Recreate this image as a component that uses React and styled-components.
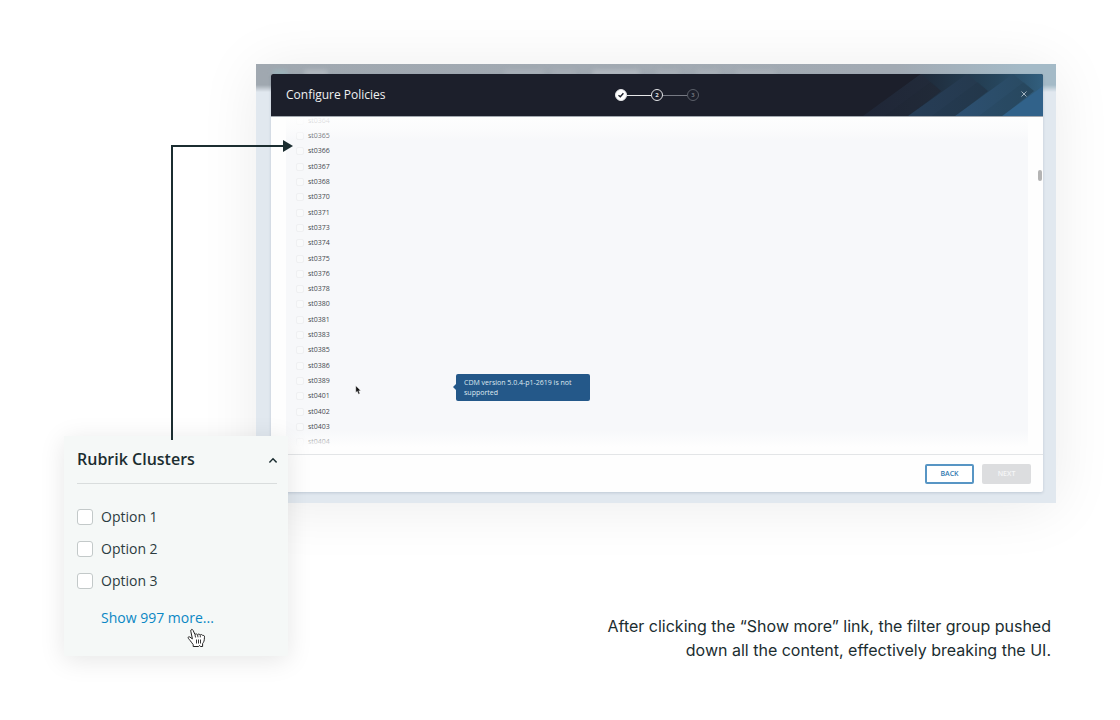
import React from "react";
import styled, { createGlobalStyle } from "styled-components";

const clusters = [
  "st0364", "st0365", "st0366", "st0367", "st0368", "st0370", "st0371", "st0373",
  "st0374", "st0375", "st0376", "st0378", "st0380", "st0381", "st0383", "st0385",
  "st0386", "st0389", "st0401", "st0402", "st0403", "st0404",
];

const GlobalStyle = createGlobalStyle`
  *, *::before, *::after { box-sizing: border-box; }
  body {
    margin: 0;
    background: #fff;
    color: #1b2d30;
    font-family: "Open Sans", "Noto Sans", sans-serif;
  }
`;

const Page = styled.main`
  position: relative;
  display: grid;
  grid-template-columns: 192px 32px 1fr;
  grid-template-rows: auto 67px auto;
  padding: 64px;
`;

const Screenshot = styled.section`
  grid-column: 2 / 4;
  grid-row: 1 / 3;
  position: relative;
  padding: 10px 13px 11px 15px;
  background: #e1e8ef;
  box-shadow: 0 4px 56px rgba(0, 0, 0, 0.08);
`;

const BackdropBar = styled.div`
  position: absolute;
  inset: 0 0 auto;
  height: 28px;
  overflow: hidden;
  background: linear-gradient(90deg, #a0a8b0 0%, #a2aab3 80%, #a4bac7 96%);
  mask-image: linear-gradient(#000 75%, transparent);
`;

const Ghost = styled.span`
  position: absolute;
  top: 6px;
  left: ${(p) => p.$at}%;
  width: ${(p) => p.$w}px;
  height: 6px;
  border-radius: 3px;
  background: ${(p) => p.$tint || "#b4bac1"};
  filter: blur(2px);
`;

const Modal = styled.div`
  position: relative;
  background: #fefefe;
  border-radius: 2px;
  box-shadow: 0 1px 3px rgba(60, 80, 110, 0.2);
`;

const ModalHeader = styled.header`
  position: relative;
  display: grid;
  grid-template-columns: 1fr auto 1fr;
  align-items: center;
  height: 43px;
  padding: 0 15px;
  overflow: hidden;
  background: #1c1f2b;
  border-bottom: 1px solid #a3a9b0;
  border-radius: 2px 2px 0 0;
`;

const HeaderArt = styled.svg`
  position: absolute;
  top: 0;
  right: 0;
  width: 192px;
  height: 42px;
`;

const ModalTitle = styled.h1`
  margin: 0;
  color: #f0f1f2;
  font-size: 12px;
  line-height: 16px;
  font-weight: 500;
`;

const Steps = styled.ol`
  display: flex;
  align-items: center;
  margin: 0;
  padding: 0;
  list-style: none;
`;

const Step = styled.li`
  display: grid;
  place-items: center;
  width: 12px;
  height: 12px;
  border: 1px solid ${(p) => (p.$muted ? "#5b5f69" : "#e4e5e8")};
  border-radius: 50%;
  background: ${(p) => (p.$done ? "#fff" : "transparent")};
  color: ${(p) => (p.$muted ? "#6d717a" : "#e4e5e8")};
  font-size: 6px;
  line-height: 8px;
  font-weight: 700;
`;

const StepLine = styled.li`
  width: 24px;
  height: 1px;
  background: ${(p) => (p.$muted ? "#777a84" : "#e6e7e9")};
`;

const CloseButton = styled.button`
  position: relative;
  justify-self: end;
  display: grid;
  place-items: center;
  width: 8px;
  height: 8px;
  margin-bottom: 2px;
  padding: 0;
  border: 0;
  background: none;
`;

const ModalBody = styled.div`
  position: relative;
  height: 338px;
  padding: 0 15px;
  overflow: hidden;
  border-bottom: 1px solid #e3e5e7;

  &::before,
  &::after {
    content: "";
    position: absolute;
    left: 0;
    right: 0;
    height: 24px;
    pointer-events: none;
  }
  &::before {
    top: 0;
    background: linear-gradient(rgba(254, 254, 254, 0.95), rgba(254, 254, 254, 0.6) 50%, rgba(254, 254, 254, 0));
  }
  &::after {
    bottom: 0;
    background: linear-gradient(rgba(254, 254, 254, 0), rgba(254, 254, 254, 0.6) 45%, #fefefe 70%);
  }
`;

const ClusterGrid = styled.ul`
  display: grid;
  grid-template-rows: repeat(22, 1fr);
  height: 337px;
  margin: -4px 0 0;
  padding: 0 10px;
  background: #f7f8fa;
  list-style: none;
`;

const ClusterLabel = styled.label`
  display: flex;
  align-items: center;
  gap: 4px;
  height: 100%;
  color: #46494e;
  font-size: 7px;
  line-height: 14px;
`;

const ClusterCheck = styled.input`
  appearance: none;
  width: 8px;
  height: 8px;
  margin: 0;
  border: 1px solid #eff0f2;
  border-radius: 2px;
  background: #f9fafb;
`;

const ScrollThumb = styled.span`
  position: absolute;
  top: 53px;
  right: 1px;
  width: 4px;
  height: 11px;
  border-radius: 2px;
  background: #b4b4b4;
`;

const Tooltip = styled.div`
  position: absolute;
  top: 257px;
  left: 185px;
  width: 134px;
  padding: 4px 8px 3px;
  border-radius: 2px;
  background: #245889;
  color: #dfe8f0;
  font-size: 7px;
  line-height: 10px;

  &::before {
    content: "";
    position: absolute;
    top: 10px;
    left: -3px;
    border: 3px solid transparent;
    border-left-width: 0;
    border-right-color: #245889;
  }
`;

const PointerIcon = styled.svg`
  position: absolute;
  top: 268px;
  left: 84px;
  width: 7px;
  height: 10px;
`;

const ModalFooter = styled.footer`
  display: flex;
  justify-content: flex-end;
  gap: 8px;
  padding: 9px 12px 8px;
`;

const FooterButton = styled.button`
  width: 49px;
  height: 20px;
  padding: 0;
  border: ${(p) => (p.$primary ? "2px solid #5795c4" : "0")};
  border-radius: 2px;
  background: ${(p) => (p.$primary ? "#fff" : "#dcdddf")};
  color: ${(p) => (p.$primary ? "#2f78b0" : "#f5f6f7")};
  font-family: inherit;
  font-size: 7px;
  line-height: 10px;
  font-weight: 600;
`;

const Connector = styled.svg`
  position: absolute;
  top: 138px;
  left: 170px;
  width: 124px;
  height: 302px;
  z-index: 3;
`;

const FilterCard = styled.aside`
  grid-column: 1 / 3;
  grid-row: 2 / 4;
  position: relative;
  z-index: 2;
  height: 220px;
  padding: 11px 11px 0 13px;
  background: #f5f8f7;
  box-shadow: 0 4px 24px rgba(0, 0, 0, 0.1);
`;

const FilterHeader = styled.header`
  display: flex;
  align-items: center;
  justify-content: space-between;
  height: 37px;
  padding-bottom: 12px;
  border-bottom: 1px solid #d9dddd;
`;

const FilterTitle = styled.h2`
  margin: 0;
  color: #1b2d30;
  font-size: 16px;
  line-height: 24px;
  font-weight: 600;
`;

const CollapseButton = styled.button`
  display: grid;
  place-items: center;
  width: 10px;
  height: 20px;
  padding: 0;
  border: 0;
  background: none;
`;

const FilterOptions = styled.div`
  display: flex;
  flex-direction: column;
  gap: 8px;
  padding-top: 21px;
`;

const OptionLabel = styled.label`
  display: flex;
  align-items: center;
  gap: 8px;
  color: #2c3c3f;
  font-size: 14px;
  line-height: 24px;
`;

const OptionCheck = styled.input`
  appearance: none;
  width: 16px;
  height: 16px;
  margin: 0;
  border: 1px solid #c3c9c9;
  border-radius: 3px;
  background: #fff;
`;

const ShowMore = styled.a`
  display: inline-block;
  margin: 13px 0 0 24px;
  color: #0a87c4;
  font-size: 14px;
  line-height: 24px;
  text-decoration: none;
`;

const HandIcon = styled.svg`
  position: absolute;
  top: 192px;
  left: 123px;
  width: 18px;
  height: 20px;
`;

const Caption = styled.p`
  grid-column: 3;
  grid-row: 3;
  justify-self: end;
  max-width: 448px;
  margin: 111px 5px 0 0;
  color: #1b2d30;
  font-family: Inter, sans-serif;
  font-size: 16px;
  line-height: 24px;
  text-align: right;
`;

export default function App() {
  return (
    <>
      <GlobalStyle />
      <Page>
        <Screenshot>
          <BackdropBar>
            <Ghost $at={2} $w={16} $tint="#9cb4bb" />
            <Ghost $at={6} $w={24} />
            <Ghost $at={31} $w={40} $tint="#a9b0b8" />
            <Ghost $at={37} $w={24} $tint="#a7aeb6" />
            <Ghost $at={42} $w={48} />
            <Ghost $at={50} $w={24} $tint="#a9b0b8" />
            <Ghost $at={55} $w={24} $tint="#a9b0b8" />
            <Ghost $at={60} $w={40} $tint="#a9b0b8" />
          </BackdropBar>
          <Modal>
            <ModalHeader>
              <HeaderArt viewBox="0 0 192 42" aria-hidden="true">
                <defs>
                  <linearGradient id="headerFade" x1="0" x2="1" y1="0" y2="0">
                    <stop offset="0" stopColor="#1c1f2b" />
                    <stop offset="0.35" stopColor="#1f2c3c" />
                    <stop offset="0.75" stopColor="#26455c" />
                    <stop offset="1" stopColor="#325f7e" />
                  </linearGradient>
                  <linearGradient id="bandOne" x1="0" x2="1" y1="0" y2="0">
                    <stop offset="0" stopColor="#1f2637" />
                    <stop offset="1" stopColor="#222b3a" />
                  </linearGradient>
                  <linearGradient id="bandTwo" x1="0" x2="1" y1="0" y2="0">
                    <stop offset="0" stopColor="#263d57" />
                    <stop offset="1" stopColor="#25394d" />
                  </linearGradient>
                  <linearGradient id="bandThree" x1="0" x2="1" y1="0" y2="0">
                    <stop offset="0" stopColor="#2d5072" />
                    <stop offset="1" stopColor="#294a61" />
                  </linearGradient>
                </defs>
                <path d="M70 0H192V42H12Z" fill="url(#headerFade)" />
                <path d="M12 42L70 0L90 17L57 42Z" fill="url(#bandOne)" />
                <path d="M57 42L116 0L137 17L104 42Z" fill="url(#bandTwo)" />
                <path d="M104 42L162 0L183 17L151 42Z" fill="url(#bandThree)" />
                <path d="M151 42L192 12V42Z" fill="#31628a" />
                <path d="M34 42L80 8L90 17L57 42ZM81 42L127 8L137 17L104 42ZM128 42L173 8L183 17L151 42Z" fill="#141c2a" opacity="0.06" />
              </HeaderArt>
              <ModalTitle>Configure Policies</ModalTitle>
              <Steps>
                <Step $done>
                  <svg width="8" height="8" viewBox="0 0 8 8" fill="none" stroke="#1c1f2b" strokeWidth="1.4">
                    <path d="M1.5 4.2L3.3 5.8L6.4 2.3" />
                  </svg>
                </Step>
                <StepLine />
                <Step>2</Step>
                <StepLine $muted />
                <Step $muted>3</Step>
              </Steps>
              <CloseButton aria-label="Close">
                <svg width="6" height="6" viewBox="0 0 6 6" stroke="#a3b3c0" strokeWidth="1">
                  <path d="M0.5 0.5L5.5 5.5M5.5 0.5L0.5 5.5" />
                </svg>
              </CloseButton>
            </ModalHeader>
            <ModalBody>
              <ClusterGrid>
                {clusters.map((name) => (
                  <li key={name}>
                    <ClusterLabel>
                      <ClusterCheck type="checkbox" />
                      {name}
                    </ClusterLabel>
                  </li>
                ))}
              </ClusterGrid>
              <ScrollThumb />
              <PointerIcon viewBox="0 0 7 10" aria-hidden="true">
                <path d="M0.8 0.8V7.6L2.3 6.3L3.5 9.2L4.9 8.6L3.7 5.8H5.8Z" fill="#111" stroke="#fff" strokeWidth="0.4" />
              </PointerIcon>
              <Tooltip role="tooltip">CDM version 5.0.4-p1-2619 is not supported</Tooltip>
            </ModalBody>
            <ModalFooter>
              <FooterButton $primary>BACK</FooterButton>
              <FooterButton disabled>NEXT</FooterButton>
            </ModalFooter>
          </Modal>
        </Screenshot>

        <FilterCard>
          <FilterHeader>
            <FilterTitle>Rubrik Clusters</FilterTitle>
            <CollapseButton aria-label="Collapse">
              <svg width="10" height="10" viewBox="0 0 10 10" fill="none" stroke="#1b2d30" strokeWidth="1.4">
                <path d="M2.4 8.4L6 4.8L9.6 8.4" />
              </svg>
            </CollapseButton>
          </FilterHeader>
          <FilterOptions>
            {["Option 1", "Option 2", "Option 3"].map((name) => (
              <OptionLabel key={name}>
                <OptionCheck type="checkbox" />
                {name}
              </OptionLabel>
            ))}
          </FilterOptions>
          <ShowMore href="#more">Show 997 more...</ShowMore>
          <HandIcon viewBox="0 0 18 20" aria-hidden="true">
            <path
              d="M6.2 18.5V16.6C5.4 15.4 4.3 14.3 3.2 12.6C2.4 11.5 1.3 10.7 1.1 9.7C1 8.8 2.2 8.5 3 9.1L5.4 10.9L3.8 3.2C3.5 1.2 5.4 0.7 6.1 2.4L8 6.6C8.6 5.7 10 5.8 10.5 6.7C11.2 5.8 12.7 6 13.2 7C14 6.2 15.4 6.5 15.8 7.6C17.2 7 18 8.4 17.4 9.8C17.4 12.8 16.8 14 15.6 15.6V18.5H13.4L12.6 17.4L11.6 18.5Z"
              fill="#fff"
              stroke="#222"
              strokeWidth="1"
              strokeLinejoin="round"
            />
            <path d="M9.5 11.5V15.5M11.5 11.5V15.5M13.5 11.5V15.5M8 6.8L8.6 9.5M10.6 7L11 9.3M13.2 7.2L13.4 9.3" stroke="#222" strokeWidth="0.9" />
          </HandIcon>
        </FilterCard>

        <Caption>
          After clicking the “Show more” link, the filter group pushed down all the content, effectively breaking the UI.
        </Caption>

        <Connector viewBox="0 0 124 302" aria-hidden="true">
          <path d="M2 302V8H114" fill="none" stroke="#1b2d30" strokeWidth="2" />
          <path d="M113 2L123 8L113 14Z" fill="#1b2d30" />
        </Connector>
      </Page>
    </>
  );
}
